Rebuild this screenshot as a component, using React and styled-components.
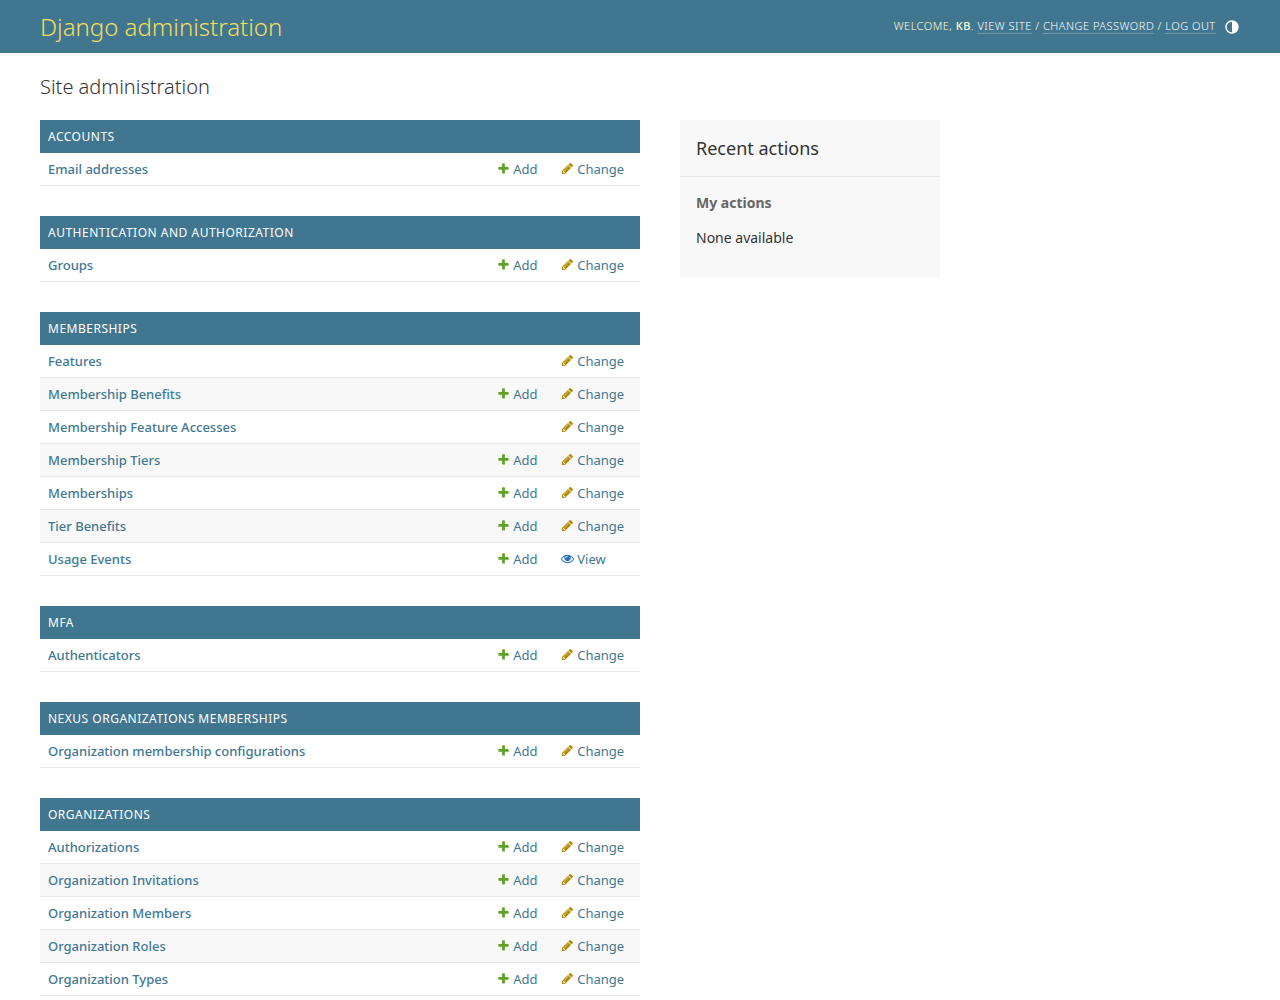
import React from 'react';
import styled, { createGlobalStyle, ThemeProvider } from 'styled-components';

const theme = {
  color: {
    primary: '#417690',
    accent: '#f5dd5d',
    link: '#417893',
    body: '#333',
    quiet: '#666',
    hairline: '#e8e8e8',
    darkened: '#f8f8f8',
    add: '#5fa225',
    change: '#b48c08',
    view: '#2b70bf',
  },
};

const icons = {
  add: 'M1600 796v192q0 40-28 68t-68 28h-416v416q0 40-28 68t-68 28h-192q-40 0-68-28t-28-68v-416h-416q-40 0-68-28t-28-68v-192q0-40 28-68t68-28h416v-416q0-40 28-68t68-28h192q40 0 68 28t28 68v416h416q40 0 68 28t28 68z',
  change: 'M491 1536l91-91-235-235-91 91v107h128v128h107zm523-928q0-22-22-22-10 0-17 7l-542 542q-7 7-7 17 0 22 22 22 10 0 17-7l542-542q7-7 7-17zm-54-192l416 416-832 832h-416v-416zm683 96q0 53-37 90l-166 166-416-416 166-165q36-38 90-38 53 0 91 38l235 234q37 39 37 91z',
  view: 'M1664 960q-152-236-381-353 61 104 61 225 0 185-131.5 316.5t-316.5 131.5-316.5-131.5-131.5-316.5q0-121 61-225-229 117-381 353 133 205 333.5 326.5t434.5 121.5 434.5-121.5 333.5-326.5zm-720-384q0-20-14-34t-34-14q-125 0-214.5 89.5t-89.5 214.5q0 20 14 34t34 14 34-14 14-34q0-86 61-147t147-61q20 0 34-14t14-34zm848 384q0 34-20 69-140 230-376.5 368.5t-499.5 138.5-499.5-139-376.5-368q-20-35-20-69t20-69q140-229 376.5-368t499.5-139 499.5 139 376.5 368q20 35 20 69z',
};

const apps = [
  { name: 'Accounts', models: [{ name: 'Email addresses' }] },
  { name: 'Authentication and Authorization', models: [{ name: 'Groups' }] },
  {
    name: 'Memberships',
    models: [
      { name: 'Features', noAdd: true },
      { name: 'Membership Benefits' },
      { name: 'Membership Feature Accesses', noAdd: true },
      { name: 'Membership Tiers' },
      { name: 'Memberships' },
      { name: 'Tier Benefits' },
      { name: 'Usage Events', viewOnly: true },
    ],
  },
  { name: 'MFA', models: [{ name: 'Authenticators' }] },
  { name: 'Nexus Organizations Memberships', models: [{ name: 'Organization membership configurations' }] },
  {
    name: 'Organizations',
    models: [
      { name: 'Authorizations' },
      { name: 'Organization Invitations' },
      { name: 'Organization Members' },
      { name: 'Organization Roles' },
      { name: 'Organization Types' },
    ],
  },
];

const Action = ({ kind, children }) => (
  <ActionLink href="#">
    <ActionIcon viewBox="0 0 1792 1792" $kind={kind}>
      <path d={icons[kind]} />
    </ActionIcon>
    {children}
  </ActionLink>
);

const AppModule = ({ app }) => (
  <Module>
    <Caption>{app.name}</Caption>
    {app.models.map(model => (
      <Row key={model.name}>
        <ModelLink href="#">{model.name}</ModelLink>
        <AddCell>{!model.noAdd && <Action kind="add">Add</Action>}</AddCell>
        <ChangeCell>
          {model.viewOnly
            ? <Action kind="view">View</Action>
            : <Action kind="change">Change</Action>}
        </ChangeCell>
      </Row>
    ))}
  </Module>
);

export default class App extends React.Component{
  render(){
    return(
      <ThemeProvider theme={theme}>
        <GlobalStyle />

        <Header>
          <SiteName>Django administration</SiteName>
          <UserTools>
            <Welcome>
              Welcome, <strong>KB</strong>. <ToolLink href="#">View site</ToolLink> / <ToolLink href="#">Change password</ToolLink> / <ToolLink href="#">Log out</ToolLink>
            </Welcome>
            <ThemeToggle>
              <svg width="16" height="16" viewBox="0 0 24 24" fill="#fff">
                <path d="M12 22C17.5228 22 22 17.5228 22 12C22 6.47715 17.5228 2 12 2C6.47715 2 2 6.47715 2 12C2 17.5228 6.47715 22 12 22ZM12 20V4A8 8 0 1 0 12 20Z" fillRule="evenodd" />
              </svg>
            </ThemeToggle>
          </UserTools>
        </Header>

        <Content>
          <Title>Site administration</Title>
          <Columns>
            <Main>
              {apps.map(app => <AppModule key={app.name} app={app} />)}
            </Main>
            <Sidebar>
              <SidebarTitle>Recent actions</SidebarTitle>
              <SidebarSubtitle>My actions</SidebarSubtitle>
              <SidebarText>None available</SidebarText>
            </Sidebar>
          </Columns>
        </Content>
      </ThemeProvider>
    )
  }
}

const GlobalStyle = createGlobalStyle`
  html, body {
    height: 100%;
  }
  body {
    margin: 0;
    overflow: hidden;
    background: #fff;
    color: ${props => props.theme.color.body};
    font-family: "Noto Sans", sans-serif;
    font-size: 14px;
  }
  a {
    color: ${props => props.theme.color.link};
    text-decoration: none;
  }
`;

const Header = styled.header`
  display: flex;
  justify-content: space-between;
  align-items: center;
  padding: 10px 40px;
  background: ${props => props.theme.color.primary};
`;

const SiteName = styled.h1`
  margin: 0;
  font-size: 24px;
  font-weight: 300;
  line-height: 33px;
  color: ${props => props.theme.color.accent};
`;

const UserTools = styled.div`
  display: flex;
  align-items: center;
  font-size: 11px;
  font-weight: 300;
  line-height: 15px;
  letter-spacing: 0.5px;
  text-transform: uppercase;
  color: #ffc;
`;

const Welcome = styled.span`
  padding-bottom: 2px;
  strong {
    font-weight: 500;
  }
`;

const ToolLink = styled.a`
  color: #fff;
  border-bottom: 1px solid rgba(255, 255, 255, 0.25);
`;

const ThemeToggle = styled.button`
  display: flex;
  margin: 1px 0 0 8.3px;
  padding: 0;
  border: 0;
  background: transparent;
  cursor: pointer;
`;

const Content = styled.div`
  padding: 20px 40px;
`;

const Title = styled.h1`
  margin: 0 0 20px;
  font-size: 20px;
  font-weight: 300;
  line-height: 27px;
`;

const Columns = styled.div`
  display: flex;
  align-items: flex-start;
  gap: 40px;
`;

const Main = styled.main`
  width: 600px;
`;

const Module = styled.section`
  margin-bottom: 30px;
`;

const Caption = styled.h2`
  margin: 0;
  padding: 8px;
  font-size: 12px;
  font-weight: 400;
  line-height: 17px;
  letter-spacing: 0.5px;
  text-transform: uppercase;
  color: #fff;
  background: ${props => props.theme.color.primary};
`;

const Row = styled.div`
  display: flex;
  font-size: 13px;
  line-height: 16px;
  border-bottom: 1px solid ${props => props.theme.color.hairline};
  &:nth-child(odd) {
    background: ${props => props.theme.color.darkened};
  }
`;

const ModelLink = styled.a`
  flex: 1;
  padding: 8px;
  font-weight: 500;
`;

const AddCell = styled.div`
  width: 48px;
  padding: 8px;
`;

const ChangeCell = styled.div`
  width: 71px;
  padding: 8px;
`;

const ActionLink = styled.a`
  display: flex;
  gap: 3.3px;
`;

const ActionIcon = styled.svg`
  flex: none;
  width: 13px;
  height: 13px;
  margin-top: 1px;
  fill: ${props => props.theme.color[props.$kind]};
`;

const Sidebar = styled.aside`
  width: 260px;
  height: 158px;
  background: ${props => props.theme.color.darkened};
`;

const SidebarTitle = styled.h2`
  margin: 0 0 16px;
  padding: 16px;
  font-size: 18px;
  font-weight: 400;
  line-height: 24px;
  border-bottom: 1px solid ${props => props.theme.color.hairline};
`;

const SidebarSubtitle = styled.h3`
  margin: 0 16px 16px;
  font-size: 14px;
  font-weight: 700;
  line-height: 19px;
  color: ${props => props.theme.color.quiet};
`;

const SidebarText = styled.p`
  margin: 0 16px;
  line-height: 19px;
`;
